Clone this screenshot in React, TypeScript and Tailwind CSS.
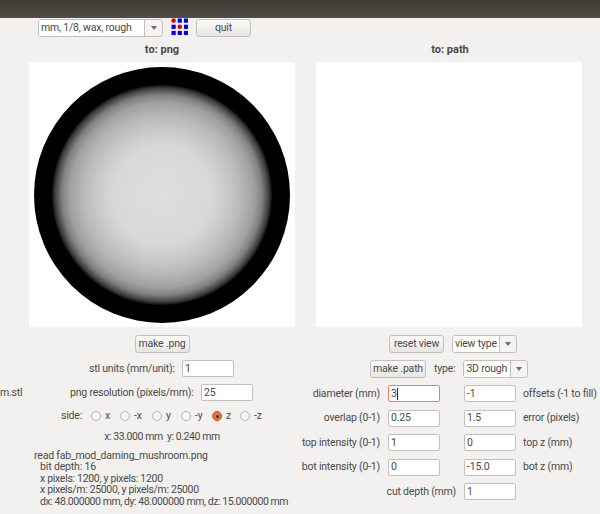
import React from 'react';

function Button({ children, className = '' }: { children: React.ReactNode; className?: string }) {
  return (
    <div className={`flex items-center justify-center h-[18px] whitespace-nowrap rounded-[3px] border border-[#c4c1bc] bg-gradient-to-b from-[#fafafa] to-[#e8e6e3] ${className}`}>
      {children}
    </div>
  );
}

function Combo({ label, width, labelWidth }: { label: string; width: string; labelWidth: string }) {
  return (
    <div className={`flex h-[18px] rounded-[3px] border border-[#c4c1bc] bg-[#f5f4f3] ${width}`}>
      <div className={`flex items-center whitespace-nowrap bg-white pl-[2px] border-r border-[#c4c1bc] rounded-l-[3px] ${labelWidth}`}>{label}</div>
      <div className="flex flex-1 items-center justify-center">
        <div className="w-0 h-0 border-x-[3.5px] border-x-transparent border-t-[4px] border-t-[#6f6b65]" />
      </div>
    </div>
  );
}

function Field({ value, focused = false, className = 'w-[52px]' }: { value: string; focused?: boolean; className?: string }) {
  return (
    <div className={`flex items-center h-[17px] px-[2px] rounded-[2px] bg-white border ${focused ? 'border-[#e9815a]' : 'border-[#c4c1bc]'} ${className}`}>
      {value}
      {focused && <div className="w-px h-[12px] bg-[#333]" />}
    </div>
  );
}

function Radio({ label, checked = false, width }: { label: string; checked?: boolean; width: string }) {
  return (
    <div className={`flex items-center gap-[4px] ${width}`}>
      {checked ? (
        <div className="flex items-center justify-center w-[10px] h-[10px] rounded-full bg-[#e9713f] border border-[#c9592b]">
          <div className="w-[3px] h-[3px] rounded-full bg-[#4c2a1a]" />
        </div>
      ) : (
        <div className="w-[10px] h-[10px] rounded-full bg-[#f7f7f6] border border-[#b5b2ad]" />
      )}
      <span>{label}</span>
    </div>
  );
}

function MillLogo() {
  const blue = [[0, 1], [0, 2], [1, 0], [1, 2], [2, 0], [2, 1], [2, 2]];
  return (
    <svg width="17" height="17" viewBox="0 0 17 17" className="ml-[8px] mr-[8px] mt-[-2px]">
      {blue.map(([r, c]) => (
        <rect key={`${r}${c}`} x={c * 6.2 + 0.5} y={r * 6.2 + 0.5} width="4.2" height="4.2" fill="#0000f0" />
      ))}
      <circle cx="2.6" cy="2.6" r="2.3" fill="#f00000" />
      <circle cx="8.8" cy="8.8" r="2.3" fill="#f00000" />
    </svg>
  );
}

function ParamRow({ label, value, value2, label2 }: { label: string; value: string; value2: string; label2: string }) {
  return (
    <div className="flex items-center h-[17px] mb-[7.5px]">
      <div className="w-[80px] flex justify-end whitespace-nowrap">{label}</div>
      <Field value={value} focused={value === '3'} className="w-[52px] ml-[8px]" />
      <Field value={value2} className="w-[52px] ml-[24px]" />
      <div className="ml-[7px] whitespace-nowrap">{label2}</div>
    </div>
  );
}

export default function App() {
  return (
    <div className="w-[600px] h-[514px] overflow-hidden bg-[#f2f1f0] text-[#4a4a48] text-[10.5px] tracking-[-0.2px] font-['Roboto',sans-serif]">
      {/* Title bar */}
      <div className="h-[18px] bg-gradient-to-b from-[#3b3a34] to-[#514e47]" />

      {/* Top controls */}
      <div className="flex items-center h-[19px] pl-[38px]">
        <Combo label="mm, 1/8, wax, rough" width="w-[125px]" labelWidth="w-[106px]" />
        <MillLogo />
        <Button className="w-[55px]">quit</Button>
      </div>

      <div className="flex">
        {/* Left column */}
        <div className="w-[324px] flex flex-col items-center shrink-0">
          <div className="mt-[5px] h-[15px] font-bold text-[11px] tracking-normal leading-[15px]">to: png</div>
          <div className="mt-[5px] w-[266px] h-[265px] bg-white flex items-center justify-center">
            <div className="w-[256px] h-[256px] rounded-full bg-black flex items-center justify-center">
              <div className="w-[220px] h-[220px] rounded-full bg-[radial-gradient(closest-side,#dedede_0%,#d8d8d8_45%,#c8c8c8_60%,#b8b8b8_72%,#a0a0a0_84%,#808080_91%,#404040_97%,#202020_99%,#101010_100%)]" />
            </div>
          </div>
          <Button className="mt-[8px] w-[55px]">make .png</Button>
          <div className="flex items-center self-stretch h-[17px] mt-[7px] pl-[89px]">
            <span className="w-[93px] whitespace-nowrap">stl units (mm/unit):</span>
            <Field value="1" className="w-[52px]" />
          </div>
          <div className="flex items-center self-stretch h-[17px] mt-[7px]">
            <span className="w-[70px]">m.stl</span>
            <span className="w-[131px] whitespace-nowrap">png resolution (pixels/mm):</span>
            <Field value="25" className="w-[52px]" />
          </div>
          <div className="flex items-center self-stretch h-[12px] mt-[9px] pl-[61px]">
            <span className="w-[30px]">side:</span>
            <Radio label="x" width="w-[29px]" />
            <Radio label="-x" width="w-[32px]" />
            <Radio label="y" width="w-[29px]" />
            <Radio label="-y" width="w-[31px]" />
            <Radio label="z" checked width="w-[28px]" />
            <Radio label="-z" width="w-[28px]" />
          </div>
          <div className="mt-[9px] h-[12px] leading-[12px] tracking-[-0.44px] whitespace-pre">x: 33.000 mm  y: 0.240 mm</div>
          <div className="mt-[7px] self-stretch pl-[34px] leading-[11.4px] whitespace-nowrap">
            <div>read fab_mod_darning_mushroom.png</div>
            <div className="pl-[6px] tracking-[-0.15px]">bit depth: 16</div>
            <div className="pl-[6px] tracking-[-0.3px]">x pixels: 1200, y pixels: 1200</div>
            <div className="pl-[6px] tracking-[-0.33px]">x pixels/m: 25000, y pixels/m: 25000</div>
            <div className="pl-[6px] tracking-[-0.44px]">dx: 48.000000 mm, dy: 48.000000 mm, dz: 15.000000 mm</div>
          </div>
        </div>

        {/* Right column */}
        <div className="flex-1 min-w-0 flex flex-col">
          <div className="mt-[5px] h-[15px] text-center font-bold text-[11px] tracking-normal leading-[15px] ml-[-24px] w-[300px]">to: path</div>
          <div className="mt-[5px] ml-[-8px] w-[266px] h-[265px] bg-white" />
          <div className="flex items-center mt-[8px] ml-[65px]">
            <Button className="w-[55px]">reset view</Button>
            <div className="ml-[8px]">
              <Combo label="view type" width="w-[65px]" labelWidth="w-[47px]" />
            </div>
          </div>
          <div className="flex items-center mt-[7px] ml-[46px]">
            <Button className="w-[56px]">make .path</Button>
            <span className="ml-[8px]">type:</span>
            <div className="ml-[8px]">
              <Combo label="3D rough" width="w-[65px]" labelWidth="w-[47px]" />
            </div>
          </div>
          <div className="mt-[7px] ml-[-24px]">
            <ParamRow label="diameter (mm)" value="3" value2="-1" label2="offsets (-1 to fill)" />
            <ParamRow label="overlap (0-1)" value="0.25" value2="1.5" label2="error (pixels)" />
            <ParamRow label="top intensity (0-1)" value="1" value2="0" label2="top z (mm)" />
            <ParamRow label="bot intensity (0-1)" value="0" value2="-15.0" label2="bot z (mm)" />
            <div className="flex items-center h-[17px] justify-end w-[216px]">
              <span>cut depth (mm)</span>
              <Field value="1" className="w-[52px] ml-[8px] shrink-0" />
            </div>
          </div>
        </div>
      </div>
    </div>
  );
}
